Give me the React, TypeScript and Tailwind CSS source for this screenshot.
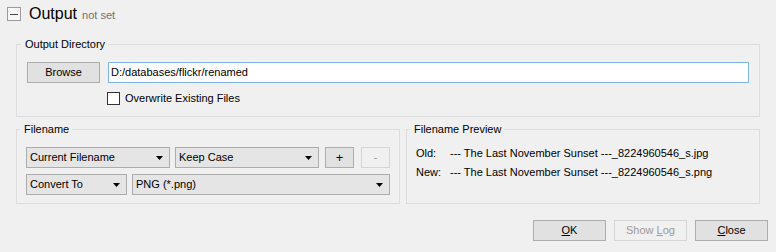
import React from 'react';

const font = { fontFamily: '"Liberation Sans", Arial, sans-serif' };

function Combo({ label, className }: { label: string; className: string }) {
  return (
    <div
      className={`flex h-[21px] items-center justify-between border border-[#acacac] bg-[#e5e5e5] pl-[3px] pr-[5px] text-[11px] text-black ${className}`}
    >
      <span>{label}</span>
      <svg width="7" height="4" viewBox="0 0 7 4" className="mr-[1px]">
        <polygon points="0,0 7,0 3.5,4" fill="#000" />
      </svg>
    </div>
  );
}

function Btn({ children, disabled, className }: { children: React.ReactNode; disabled?: boolean; className?: string }) {
  return (
    <button
      className={`flex h-[21px] items-center justify-center border text-[11px] ${
        disabled ? 'border-[#d5d5d5] bg-[#f0f0f0] text-[#9a9a9a]' : 'border-[#adadad] bg-[#e1e1e1] text-black'
      } ${className ?? ''}`}
    >
      {children}
    </button>
  );
}

export default function App() {
  return (
    <div className="h-[252px] w-[776px] overflow-hidden bg-[#f0f0f0] text-black" style={font}>
      {/* header */}
      <div className="flex h-[38px] items-start pl-[7px] pt-[7px]">
        <div className="flex h-[14px] w-[14px] items-center justify-center border border-[#9a9a9a] bg-[#f7f7f7]">
          <div className="h-[1px] w-[8px] bg-[#444]" />
        </div>
        <div className="ml-[8px] flex items-baseline leading-none">
          <span className="mt-[-1px] text-[16px]">Output</span>
          <span className="ml-[5px] text-[11px] text-[#707070]">not set</span>
        </div>
      </div>

      {/* output directory */}
      <fieldset className="mx-[16px] border border-[#dcdcdc] px-[10px] pb-[11px] pt-[12px]">
        <legend className="ml-[-6px] pl-[4px] pr-[3px] text-[11px] leading-[12px]">Output Directory</legend>
        <div className="flex gap-[8px]">
          <Btn className="w-[73px]">Browse</Btn>
          <div className="flex h-[21px] flex-1 items-center border border-[#7eb4ea] bg-white pl-[2px] text-[11px]">
            D:/databases/flickr/renamed
          </div>
        </div>
        <div className="ml-[80px] mt-[9px] flex h-[13px] items-center gap-[5px] text-[11px]">
          <div className="h-[13px] w-[13px] border border-[#333] bg-white" />
          <span>Overwrite Existing Files</span>
        </div>
      </fieldset>

      <div className="mx-[16px] mt-[6px] flex gap-[6px]">
        {/* filename */}
        <fieldset className="w-[384px] border border-[#dcdcdc] px-[9px] pb-[8px] pt-[12px]">
          <legend className="ml-[-6px] pl-[4px] pr-[3px] text-[11px] leading-[12px]">Filename</legend>
          <div className="flex items-center">
            <Combo label="Current Filename" className="w-[144px]" />
            <Combo label="Keep Case" className="ml-[5px] w-[144px]" />
            <Btn className="ml-[6px] w-[29px] text-[13px]">+</Btn>
            <Btn disabled className="ml-[7px] w-[29px]">-</Btn>
          </div>
          <div className="mt-[6px] flex items-center">
            <Combo label="Convert To" className="w-[101px]" />
            <Combo label="PNG (*.png)" className="ml-[5px] w-[258px]" />
          </div>
        </fieldset>

        {/* preview */}
        <fieldset className="flex-1 border border-[#dcdcdc] pl-[9px] pt-[9px]">
          <legend className="ml-[-6px] pl-[4px] pr-[3px] text-[11px] leading-[12px]">Filename Preview</legend>
          <div className="grid grid-cols-[34px_1fr] text-[11px] leading-[19px]">
            <span>Old:</span>
            <span>--- The Last November Sunset ---_8224960546_s.jpg</span>
            <span>New:</span>
            <span>--- The Last November Sunset ---_8224960546_s.png</span>
          </div>
        </fieldset>
      </div>

      {/* dialog buttons */}
      <div className="mt-[16px] flex justify-end gap-[8px] pr-[8px]">
        <Btn className="w-[73px]">
          <span><u>O</u>K</span>
        </Btn>
        <Btn disabled className="w-[73px]">
          <span>Show <u>L</u>og</span>
        </Btn>
        <Btn className="w-[73px]">
          <span><u>C</u>lose</span>
        </Btn>
      </div>
    </div>
  );
}
